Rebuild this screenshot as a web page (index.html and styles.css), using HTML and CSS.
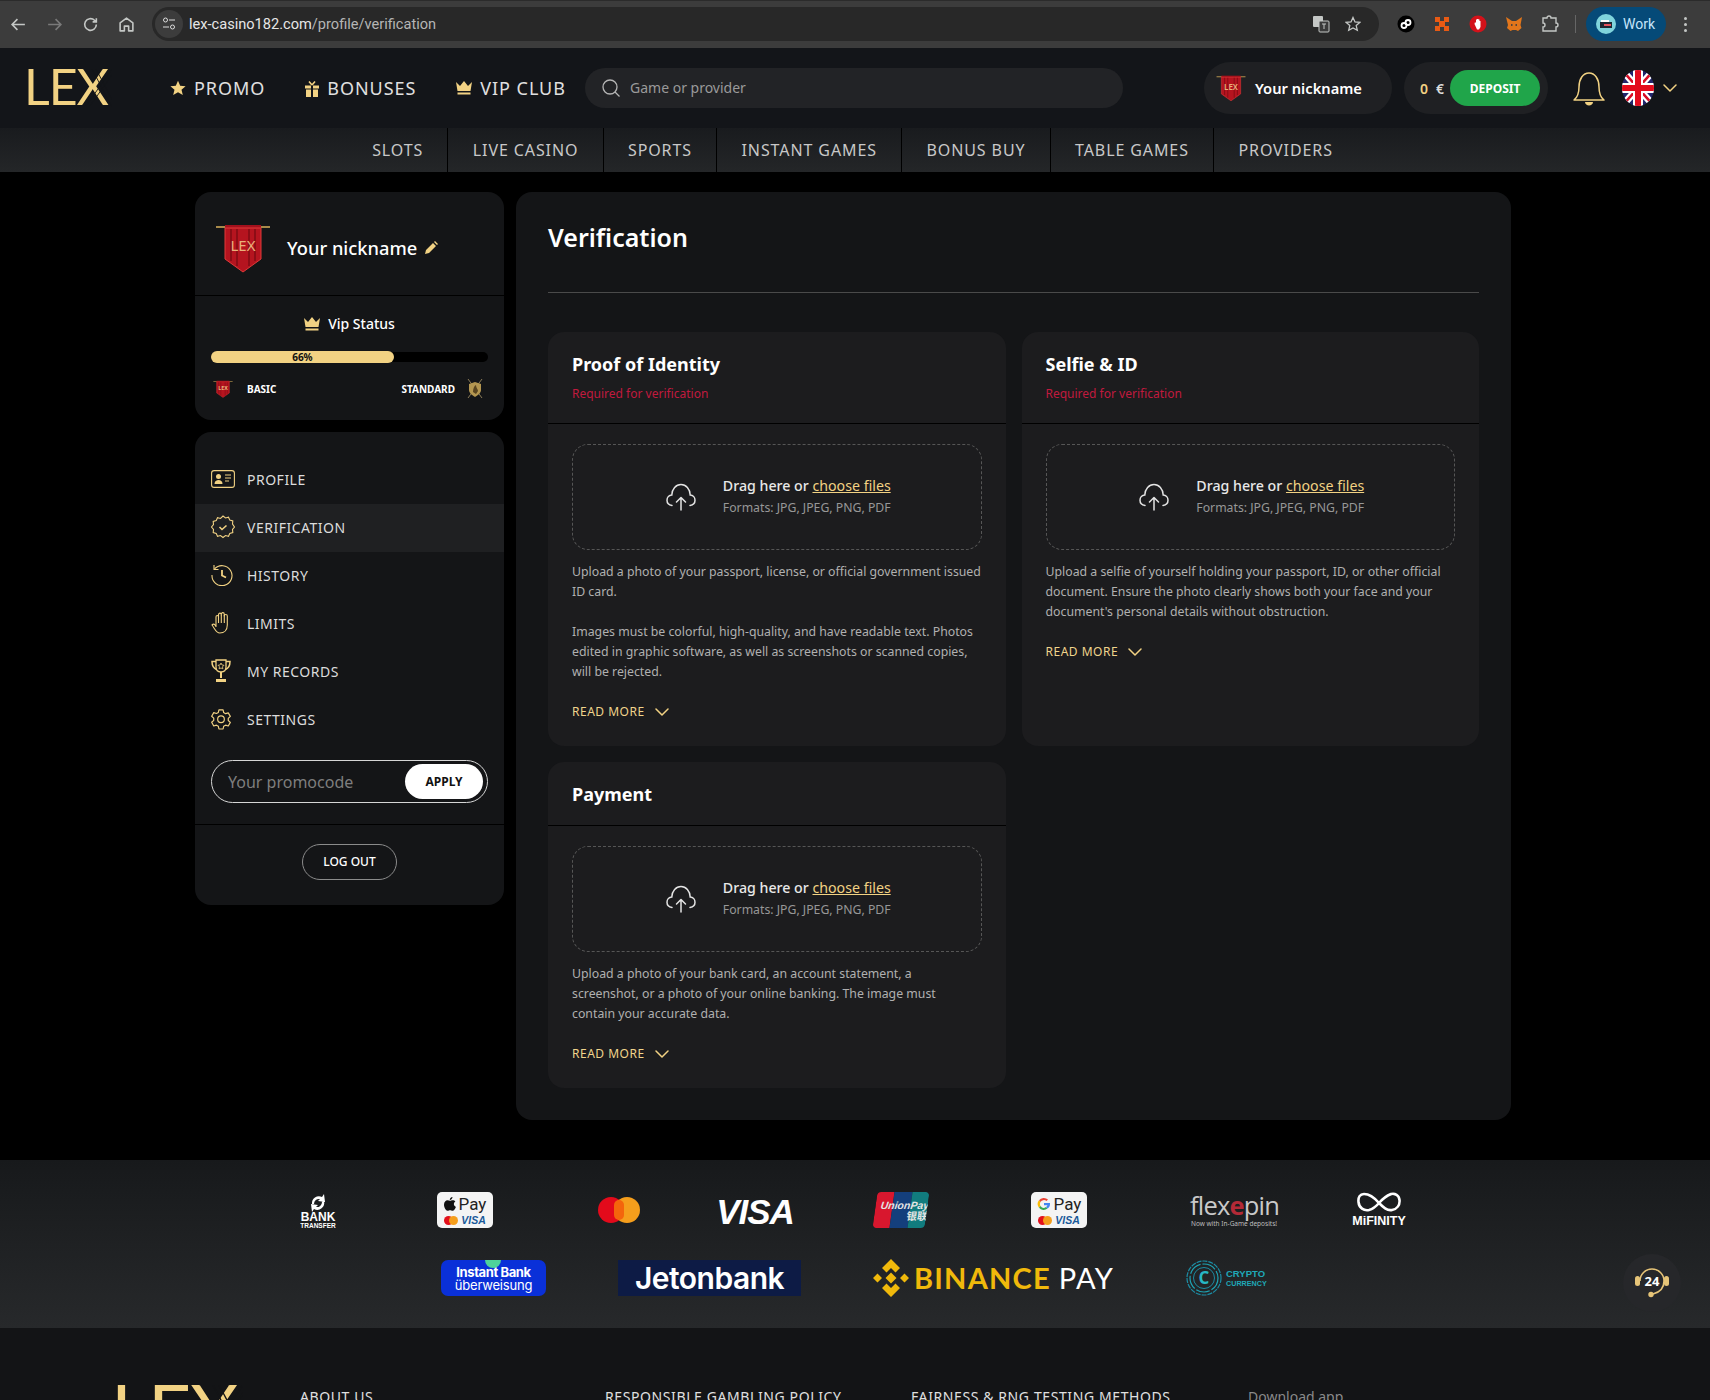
FILE: index.html
```html
<!DOCTYPE html>
<html lang="en">
<head>
    <meta charset="UTF-8">
    <title>Verification</title>
    <link rel="stylesheet" href="styles.css">
</head>
<body>
    <svg class="defs" width="0" height="0">
        <symbol id="banner" viewBox="0 0 56 50">
            <rect x="1" y="3" width="54" height="2" fill="#a88a4a"/>
            <path d="M10 2 H46 V6 H10Z" fill="#a3101c"/>
            <path d="M10 5 H46 V36 L28 49 L10 36Z" fill="#b5141f" stroke="#e03a3a" stroke-width="1"/>
            <path d="M16 6 V38 M22 6 V43 M34 6 V43 M40 6 V38" stroke="#8c0d16" stroke-width="2"/>
            <text x="28" y="28" class="banner-text" text-anchor="middle">LEX</text>
        </symbol>
        <symbol id="cloud" viewBox="0 0 30 28">
            <path d="M6 22.5C3 22 1 19.8 1 17.2 1 14.4 3.2 12.2 5.8 12 6 6 10 1.500 15 1.500S24 6 24.200 12C26.800 12.200 29 14.400 29 17.200 29 19.800 27 22 24 22.500" fill="none" stroke="#e4e4e4" stroke-width="1.500" stroke-linecap="round"/>
            <path d="M15 27V14.500M10.500 19 15 14.500 19.500 19" fill="none" stroke="#e4e4e4" stroke-width="1.500" stroke-linecap="round" stroke-linejoin="round"/>
        </symbol>
        <symbol id="chev" viewBox="0 0 14 8">
            <path d="M1 1 7 7 13 1" fill="none" stroke="#f2d283" stroke-width="1.500" stroke-linecap="round" stroke-linejoin="round"/>
        </symbol>
        <symbol id="crown" viewBox="0 0 16 14">
            <path d="M0 1 4 5 8 0 12 5 16 1 14.500 10H1.500Z" fill="#f2d283"/>
            <rect x="1.500" y="11.500" width="13" height="2" fill="#f2d283"/>
        </symbol>
    </svg>

    <div class="browser">
        <svg class="br-ic" viewBox="0 0 16 16"><path d="M14 8H2M7 3 2 8l5 5" fill="none" stroke="#c4c7c5" stroke-width="1.500"/></svg>
        <svg class="br-ic" viewBox="0 0 16 16"><path d="M2 8h12M9 3l5 5-5 5" fill="none" stroke="#7a7a7a" stroke-width="1.500"/></svg>
        <svg class="br-ic" viewBox="0 0 16 16"><path d="M13.500 8A5.500 5.500 0 1 1 11.800 4L13.500 5.500M13.500 2V5.500H10" fill="none" stroke="#c4c7c5" stroke-width="1.500"/></svg>
        <svg class="br-ic" viewBox="0 0 16 16"><path d="M2 14V6.500L8 2l6 4.500V14H10V9.500H6V14Z" fill="none" stroke="#c4c7c5" stroke-width="1.500" stroke-linejoin="round"/></svg>
        <div class="omni">
            <span class="omni-tune"><svg width="14" height="14" viewBox="0 0 14 14"><circle cx="3.500" cy="3" r="2" fill="none" stroke="#ddd"/><path d="M7 3h6M1 10h6" stroke="#ddd"/><circle cx="10.500" cy="10" r="2" fill="none" stroke="#ddd"/></svg></span>
            <span class="omni-url">lex-casino182.com<span class="omni-path">/profile/verification</span></span>
            <svg class="omni-tr" viewBox="0 0 18 18"><rect x="1" y="1" width="10" height="11" rx="1" fill="#c4c7c5"/><rect x="7" y="6" width="10" height="11" rx="1" fill="#3a3a3a" stroke="#c4c7c5"/><path d="M10 9h4M12 9v5" stroke="#c4c7c5"/></svg>
            <svg class="omni-star" viewBox="0 0 16 16"><path d="M8 1.500 10 6l4.800.4-3.600 3.200 1.100 4.700L8 11.900l-4.300 2.400 1.100-4.700L1.200 6.400 6 6Z" fill="none" stroke="#c4c7c5" stroke-width="1.300"/></svg>
        </div>
        <div class="ext-list">
            <svg class="ext" viewBox="0 0 18 18"><circle cx="9" cy="9" r="8.500" fill="#000"/><circle cx="7" cy="10.500" r="2.500" fill="none" stroke="#fff" stroke-width="1.800"/><circle cx="11" cy="7.500" r="2.500" fill="none" stroke="#fff" stroke-width="1.800"/></svg>
            <svg class="ext" viewBox="0 0 18 18"><path d="M2 2h5v5H2ZM11 2h5v5h-5ZM2 11h5v5H2ZM11 11h5v5h-5ZM6 6h6v6H6Z" fill="#e85a14"/></svg>
            <svg class="ext" viewBox="0 0 18 18"><circle cx="9" cy="9" r="8.500" fill="#d3121a"/><path d="M5.500 9 6 7l1 1V4.500h1V4h1.500v.5h1V6h1v6l-1.500 2.500H8Z" fill="#fff"/></svg>
            <svg class="ext" viewBox="0 0 18 18"><path d="M1 2 7 6h4l6-4-1.500 8 1 3-3.500 3-2-1H7.500l-2 1L2 13l1-3Z" fill="#e2761b"/><path d="M6 10h1.500M10.500 10H12" stroke="#233447" stroke-width="1.500"/></svg>
            <svg class="ext" viewBox="0 0 18 18"><path d="M2 3h4a2 2 0 0 1 4 0h5v5a2 2 0 0 1 0 4v4H2v-4a2 2 0 0 0 0-4Z" fill="none" stroke="#c4c7c5" stroke-width="1.400"/></svg>
        </div>
        <span class="br-sep"></span>
        <div class="work">
            <svg width="20" height="20" viewBox="0 0 20 20"><circle cx="10" cy="10" r="10" fill="#7fd4dc"/><path d="M4 8h12v6H4Z" fill="#1d2833"/><path d="M8 10h7v2H8Z" fill="#e2525c"/><path d="M5 6h8v2H5Z" fill="#fff"/></svg>
            <span>Work</span>
        </div>
        <span class="br-dots"><i></i><i></i><i></i></span>
    </div>

    <header class="top">
        <a class="logo">
            <svg width="88" height="38" viewBox="0 0 88 38">
                <text x="0" y="36" class="logo-text">LEX</text>
                <path d="M62 37 88 0M66 37 92 0M68 0 88 38M72 0 92 38" class="logo-cut"/>
            </svg>
        </a>
        <nav class="main-nav">
            <a class="main-link"><svg width="16" height="16" viewBox="0 0 16 16"><path d="M8 .8 10.200 5.800l5.400.5-4.100 3.500 1.300 5.300L8 12.300l-4.800 2.800 1.300-5.300L.4 6.300l5.400-.5Z" fill="#f2d283"/></svg>PROMO</a>
            <a class="main-link"><svg width="14" height="17" viewBox="0 0 14 17"><path d="M0 5.500h6v3H0ZM8 5.500h6v3H8ZM1 9.500h5V17H1ZM8 9.500h5V17H8Z" fill="#f2d283"/><path d="M7 5 4 1.500M7 5l3-3.500" stroke="#f2d283" stroke-width="1.600" fill="none"/></svg>BONUSES</a>
            <a class="main-link"><svg width="16" height="14"><use href="#crown"/></svg>VIP CLUB</a>
        </nav>
        <div class="search">
            <svg width="20" height="20" viewBox="0 0 20 20"><circle cx="9" cy="9" r="7" fill="none" stroke="#b5b5b5" stroke-width="1.300"/><path d="M14 14l4.500 4.500" stroke="#b5b5b5" stroke-width="1.300"/></svg>
            <span>Game or provider</span>
        </div>
        <div class="user-pill">
            <svg width="30" height="32"><use href="#banner"/></svg>
            <span>Your nickname</span>
        </div>
        <div class="balance">
            <span class="bal-num">0</span><span class="bal-cur">€</span>
            <a class="deposit">DEPOSIT</a>
        </div>
        <svg class="bell" width="32" height="35" viewBox="0 0 32 35">
            <path d="M1 29c4-3 5-7 5-13C6 8 10 2 16 2s10 6 10 14c0 6 1 10 5 13Z" fill="none" stroke="#f2d283" stroke-width="1.500" stroke-linejoin="round"/>
            <path d="M12 31h8c0 2-2 3.500-4 3.500S12 33 12 31Z" fill="#f2d283"/>
        </svg>
        <svg class="flag" width="32" height="36" viewBox="0 0 32 36">
            <clipPath id="flagc"><ellipse cx="16" cy="18" rx="16" ry="18"/></clipPath>
            <g clip-path="url(#flagc)">
                <rect width="32" height="36" fill="#22246b"/>
                <path d="M0 0 32 36M32 0 0 36" stroke="#fff" stroke-width="7"/>
                <path d="M0 0 32 36M32 0 0 36" stroke="#d80d25" stroke-width="2.500"/>
                <path d="M16 0V36M0 18H32" stroke="#fff" stroke-width="10"/>
                <path d="M16 0V36M0 18H32" stroke="#e30b1c" stroke-width="6"/>
            </g>
        </svg>
        <svg class="lang-chev" width="14" height="8"><use href="#chev"/></svg>
    </header>

    <nav class="sub-nav">
        <a class="sub-link">SLOTS</a>
        <a class="sub-link">LIVE CASINO</a>
        <a class="sub-link">SPORTS</a>
        <a class="sub-link">INSTANT GAMES</a>
        <a class="sub-link">BONUS BUY</a>
        <a class="sub-link">TABLE GAMES</a>
        <a class="sub-link">PROVIDERS</a>
    </nav>

    <div class="page">
        <aside class="side">
            <section class="side-card">
                <div class="side-user">
                    <svg width="56" height="50"><use href="#banner"/></svg>
                    <span class="side-name">Your nickname</span>
                    <svg width="13" height="13" viewBox="0 0 13 13"><path d="M0 13 1 9 8 2l3 3-7 7ZM9 1l1-1 3 3-1 1Z" fill="#f2d283"/></svg>
                </div>
                <div class="vip">
                    <div class="vip-title"><svg width="16" height="14"><use href="#crown"/></svg>Vip Status</div>
                    <div class="bar"><div class="bar-fill" style="width:66%">66%</div></div>
                    <div class="vip-levels">
                        <svg width="20" height="20"><use href="#banner"/></svg>
                        <span class="vip-basic">BASIC</span>
                        <span class="vip-std">STANDARD</span>
                        <svg width="16" height="21" viewBox="0 0 16 21">
                            <path d="M1 1 15 20M15 1 1 20" stroke="#8b7b58" stroke-width="1"/>
                            <path d="M2 6 8 4l6 2v6c0 3-3 5-6 7-3-2-6-4-6-7Z" fill="#b49650"/>
                            <path d="M6 14c0-3 1-6 3-7 0 3 2 4 2 6l-2 3Z" fill="#5a4520"/>
                        </svg>
                    </div>
                </div>
            </section>
            <section class="side-card">
                <ul class="menu">
                    <li class="menu-item">
                        <svg width="24" height="18" viewBox="0 0 24 18"><rect x=".6" y=".6" width="22.800" height="16.800" rx="2.500" fill="none" stroke="#f2d283" stroke-width="1.100"/><circle cx="7.500" cy="6.500" r="2.500" fill="#f2d283"/><path d="M3.500 14c0-3 2-4 4-4s4 1 4 4Z" fill="#f2d283"/><path d="M14 5h6M14 8h6M14 11h4" stroke="#f2d283"/></svg>
                        PROFILE
                    </li>
                    <li class="menu-item is-active">
                        <svg width="24" height="24" viewBox="0 0 24 24"><path d="M12 1l2.500 2 3-.8 1.300 2.900 3 .8-.3 3.100L23.500 12l-2 2.500.3 3-3 .9-1.300 2.900-3-.8-2.500 2-2.500-2-3 .8-1.300-2.900-3-.9.3-3L.500 12l2-2.500-.3-3 3-.9 1.300-2.900 3 .8Z" fill="none" stroke="#f2d283" stroke-width="1.100"/><path d="M8.500 12l2.500 2.500 4.500-4" fill="none" stroke="#f2d283" stroke-width="1.600"/></svg>
                        VERIFICATION
                    </li>
                    <li class="menu-item">
                        <svg width="22" height="22" viewBox="0 0 22 22"><path d="M3.500 5A10 10 0 1 1 1 11" fill="none" stroke="#f2d283" stroke-width="1.100"/><path d="M3 1v4.500h4.500" fill="none" stroke="#f2d283" stroke-width="1.100"/><path d="M11 6v5.500l4 2" fill="none" stroke="#f2d283" stroke-width="1.800"/></svg>
                        HISTORY
                    </li>
                    <li class="menu-item">
                        <svg width="22" height="22" viewBox="0 0 22 22"><path d="M1 13c2-2 3 0 4 1.500V5c0-2 2.500-2 2.500 0V3c0-2.500 2.800-2.500 2.800 0v-.5c0-2.500 3-2.500 3 0V4c0-2 3-2 3 0v9c0 5-3 8-7.500 8C5 21 4 17 1 13Z" fill="none" stroke="#f2d283" stroke-width="1.100" stroke-linejoin="round"/><path d="M7.500 5v6M10.300 3v8M13.300 3v8" stroke="#f2d283" stroke-width="1.100"/></svg>
                        LIMITS
                    </li>
                    <li class="menu-item">
                        <svg width="20" height="24" viewBox="0 0 20 24"><path d="M5 1h10v7c0 3-2 5-5 5s-5-2-5-5Z" fill="none" stroke="#f2d283" stroke-width="1.300"/><path d="M5 2.500H1c0 4 1 6.500 4.500 8M15 2.500h4c0 4-1 6.500-4.500 8" fill="none" stroke="#f2d283" stroke-width="1.500"/><path d="M10 4l1 2 2 .3-1.500 1.500.4 2L10 9l-1.900.8.400-2L7 6.300 9 6Z" fill="none" stroke="#f2d283" stroke-width=".8"/><path d="M9 13h2v6H9Z" fill="#f2d283"/><path d="M5 20h10v3H5Z" fill="#f2d283"/></svg>
                        MY RECORDS
                    </li>
                    <li class="menu-item">
                        <svg width="20" height="22" viewBox="0 0 24 24"><path d="M9.500 1h5l.7 3.300 2.300 1.300 3.200-1 2.500 4.300-2.500 2.300v2.600l2.500 2.300-2.500 4.300-3.200-1-2.300 1.300-.7 3.300h-5l-.7-3.300-2.300-1.300-3.200 1L.800 15.900l2.500-2.300V11L.800 8.700l2.500-4.300 3.200 1 2.300-1.300Z" fill="none" stroke="#f2d283" stroke-width="1.400" stroke-linejoin="round"/><circle cx="12" cy="12.300" r="4" fill="none" stroke="#f2d283" stroke-width="1.400"/></svg>
                        SETTINGS
                    </li>
                </ul>
                <div class="promo">
                    <span class="promo-ph">Your promocode</span>
                    <a class="promo-btn">APPLY</a>
                </div>
                <div class="logout-row"><a class="logout">LOG OUT</a></div>
            </section>
        </aside>

        <main class="main">
            <h1 class="main-title">Verification</h1>
            <div class="doc-grid">
                <section class="doc">
                    <div class="doc-head">
                        <h2 class="doc-title">Proof of Identity</h2>
                        <div class="doc-req">Required for verification</div>
                    </div>
                    <div class="doc-body">
                        <div class="drop">
                            <svg width="30" height="28"><use href="#cloud"/></svg>
                            <div>
                                <div class="drop-main">Drag here or <a class="drop-link">choose files</a></div>
                                <div class="drop-sub">Formats: JPG, JPEG, PNG, PDF</div>
                            </div>
                        </div>
                        <p class="doc-text">Upload a photo of your passport, license, or official government issued ID card.</p>
                        <p class="doc-text">Images must be colorful, high-quality, and have readable text. Photos edited in graphic software, as well as screenshots or scanned copies, will be rejected.</p>
                        <a class="more">READ MORE <svg width="14" height="8"><use href="#chev"/></svg></a>
                    </div>
                </section>
                <section class="doc">
                    <div class="doc-head">
                        <h2 class="doc-title">Selfie &amp; ID</h2>
                        <div class="doc-req">Required for verification</div>
                    </div>
                    <div class="doc-body">
                        <div class="drop">
                            <svg width="30" height="28"><use href="#cloud"/></svg>
                            <div>
                                <div class="drop-main">Drag here or <a class="drop-link">choose files</a></div>
                                <div class="drop-sub">Formats: JPG, JPEG, PNG, PDF</div>
                            </div>
                        </div>
                        <p class="doc-text">Upload a selfie of yourself holding your passport, ID, or other official document. Ensure the photo clearly shows both your face and your document's personal details without obstruction.</p>
                        <a class="more">READ MORE <svg width="14" height="8"><use href="#chev"/></svg></a>
                    </div>
                </section>
                <section class="doc">
                    <div class="doc-head doc-head-short">
                        <h2 class="doc-title">Payment</h2>
                    </div>
                    <div class="doc-body">
                        <div class="drop">
                            <svg width="30" height="28"><use href="#cloud"/></svg>
                            <div>
                                <div class="drop-main">Drag here or <a class="drop-link">choose files</a></div>
                                <div class="drop-sub">Formats: JPG, JPEG, PNG, PDF</div>
                            </div>
                        </div>
                        <p class="doc-text">Upload a photo of your bank card, an account statement, a<br>screenshot, or a photo of your online banking. The image must contain your accurate data.</p>
                        <a class="more">READ MORE <svg width="14" height="8"><use href="#chev"/></svg></a>
                    </div>
                </section>
            </div>
        </main>
    </div>

    <section class="pay">
        <div class="pay-row pay-row-top">
            <svg class="p-bank" width="36" height="36" viewBox="0 0 36 36">
                <path d="M12 12a7 7 0 0 1 10-7l2-3 1 8-7-1 2-2a5 5 0 0 0-6 5ZM24 9a7 7 0 0 1-10 8l-2 3-1-8 7 1-2 2a5 5 0 0 0 6-5Z" fill="#fff"/>
                <text x="18" y="29" class="t-bank" text-anchor="middle">BANK</text>
                <text x="18" y="35.500" class="t-bank2" text-anchor="middle">TRANSFER</text>
            </svg>
            <div class="p-wallet p-apple">
                <div class="wallet-top"><svg width="12" height="14" viewBox="0 0 12 14"><path d="M8.500 0c.1 1.500-1.200 3-2.700 3C5.600 1.500 7 .1 8.500 0ZM6 3.800c.8 0 1.500-.6 2.800-.6 1 0 2 .5 2.600 1.400-2.200 1.300-1.900 4.400.5 5.300-.6 1.600-1.900 3.900-3.300 3.900-1 0-1.400-.6-2.500-.6s-1.500.6-2.500.6C1.800 13.800 0 10.500 0 7.800c0-2.800 1.800-4.500 3.500-4.500 1 0 1.900.5 2.500.5Z" fill="#111"/></svg><span>Pay</span></div>
                <div class="wallet-bot"><i class="mc-a"></i><i class="mc-b"></i><b>VISA</b></div>
            </div>
            <div class="p-mc"><i class="mc-l"></i><i class="mc-m"></i><i class="mc-r"></i></div>
            <span class="p-visa">VISA</span>
            <div class="p-union">
                <i class="un-r"></i><i class="un-b"></i><i class="un-g"></i>
                <span class="un-text">UnionPay<br><em>银联</em></span>
            </div>
            <div class="p-wallet p-google">
                <div class="wallet-top"><svg width="14" height="14" viewBox="0 0 14 14"><path d="M2 3.300A6 6 0 0 1 11 2.600L9.500 4.100A4 4 0 0 0 3.500 5Z" fill="#ea4335"/><path d="M3.500 9 2 10.700A6 6 0 0 1 2 3.300L3.500 5a4 4 0 0 0 0 4Z" fill="#fbbc05"/><path d="M10.500 11.500A6 6 0 0 1 2 10.700L3.500 9a4 4 0 0 0 5.500 1Z" fill="#34a853"/><path d="M13 7c0 2-.9 3.500-2.500 4.500L9 10a2.500 2.500 0 0 0 1.400-1.800H7V6h6Z" fill="#4285f4"/></svg><span>Pay</span></div>
                <div class="wallet-bot"><i class="mc-a"></i><i class="mc-b"></i><b>VISA</b></div>
            </div>
            <div class="p-flex">
                <div class="flex-name">flex<span>e</span>pin</div>
                <div class="flex-sub">Now with In-Game deposits!</div>
            </div>
            <div class="p-mif">
                <svg width="46" height="22" viewBox="0 0 46 22"><path d="M23 11C17 4 12 2 8 2 4 2 2 5 2.500 10 3 16 8 19 13 18 17 17 20 14.500 23 11 26 7.500 30 4 35 2 39 1 43 3 43.500 8 44 13 41 17 36 18 31 19 27 15 23 11Z" fill="none" stroke="#fff" stroke-width="2.600"/><path d="M2.500 10C3 16 8 19 13 18M29 5C33 2 40 1 43 6" fill="none" stroke="#fff" stroke-width="1.200"/></svg>
                <span>MiFINITY</span>
            </div>
        </div>
        <div class="pay-row">
            <div class="p-instant">
                <i class="inst-dot"></i>
                <span class="inst-a">Instant Bank</span>
                <span class="inst-b">überweisung</span>
            </div>
            <div class="p-jeton">Jetonbank</div>
            <div class="p-binance">
                <svg width="36" height="38" viewBox="0 0 36 38"><path d="M18 0 27 9 22.500 13.500 18 9 13.500 13.500 9 9ZM18 38 27 29 22.500 24.500 18 29 13.500 24.500 9 29ZM0 19 4.500 14.500 9 19 4.500 23.500ZM27 19 31.500 14.500 36 19 31.500 23.500ZM18 13.500 23.500 19 18 24.500 12.500 19Z" fill="#f0b90b"/></svg>
                <span class="bn-a">BINANCE</span><span class="bn-b">PAY</span>
            </div>
            <div class="p-crypto">
                <svg width="36" height="36" viewBox="0 0 36 36">
                    <circle cx="18" cy="18" r="17" fill="none" stroke="#1c8ba3" stroke-width="1.200" stroke-dasharray="5 1"/>
                    <circle cx="18" cy="18" r="14" fill="none" stroke="#1ea4b5" stroke-width="1.200" stroke-dasharray="14 2"/>
                    <circle cx="18" cy="18" r="10.500" fill="none" stroke="#1c8ba3" stroke-width="1"/>
                    <text x="18" y="24" class="t-crypto" text-anchor="middle">C</text>
                </svg>
                <div class="crypto-text"><div>CRYPTO</div><div>CURRENCY</div></div>
            </div>
        </div>
        <div class="support">
            <svg width="36" height="34" viewBox="0 0 36 34">
                <path d="M6 15a12 12 0 0 1 24 0c0 7-3 11-11 13" fill="none" stroke="#e6c478" stroke-width="1.600"/>
                <rect x="1" y="10" width="5" height="10" rx="2.500" fill="#e6c478"/>
                <rect x="30" y="10" width="5" height="10" rx="2.500" fill="#e6c478"/>
                <circle cx="17" cy="28.500" r="2.700" fill="#e6c478"/>
                <text x="18" y="20" class="t-24" text-anchor="middle">24</text>
            </svg>
        </div>
    </section>

    <footer class="foot">
        <svg class="foot-logo" width="132" height="57" viewBox="0 0 88 38"><text x="0" y="36" class="logo-text">LEX</text><path d="M62 37 88 0M66 37 92 0M68 0 88 38M72 0 92 38" class="logo-cut foot-cut"/></svg>
        <a class="foot-link foot-about">ABOUT US</a>
        <a class="foot-link foot-resp">RESPONSIBLE GAMBLING POLICY</a>
        <a class="foot-link foot-fair">FAIRNESS &amp; RNG TESTING METHODS</a>
        <a class="foot-down">Download app</a>
    </footer>
</body>
</html>
```

FILE: styles.css
```css
* {
    box-sizing: border-box;
}
html, body {
    height: 1400px;
    overflow: hidden;
}
body {
    margin: 0;
    background-color: #000;
    color: #fff;
    font-family: "Noto Sans", "Open Sans", sans-serif;
    display: flex;
    flex-direction: column;
}
.defs {
    position: absolute;
}
a {
    color: inherit;
}
h1, h2, p, ul {
    margin: 0;
    padding: 0;
}
.banner-text {
    font-family: "Noto Sans", sans-serif;
    font-size: 15px;
    fill: #e9b07a;
}

/* browser bar */
.browser {
    height: 48px;
    flex: none;
    background-color: #3c3c3c;
    box-shadow: inset 0 1px 0 #2b2b2b;
    display: flex;
    align-items: center;
    padding-left: 10px;
}
.br-ic {
    width: 17px;
    height: 17px;
    margin-right: 19px;
}
.omni {
    width: 1227px;
    height: 34px;
    margin-left: -2px;
    border-radius: 17px;
    background-color: #282828;
    display: flex;
    align-items: center;
    padding: 0 3px;
}
.omni-tune {
    width: 28px;
    height: 28px;
    border-radius: 14px;
    background-color: #3c3c3c;
    display: flex;
    align-items: center;
    justify-content: center;
}
.omni-url {
    margin-left: 6px;
    flex: 1;
    font-family: Roboto, sans-serif;
    font-size: 14.600px;
    color: #e6e6e6;
}
.omni-path {
    color: #b5b5b5;
}
.omni-tr {
    width: 18px;
    height: 18px;
    margin-right: 15px;
}
.omni-star {
    width: 16px;
    height: 16px;
    margin-right: 15px;
}
.ext-list {
    display: flex;
    gap: 18px;
    margin-left: 18px;
}
.ext {
    width: 18px;
    height: 18px;
}
.br-sep {
    width: 1px;
    height: 18px;
    margin-left: 16px;
    background-color: #666;
}
.work {
    margin-left: 10px;
    width: 80px;
    height: 34px;
    border-radius: 17px;
    background-color: #054a78;
    color: #c5e5fb;
    font-family: Roboto, sans-serif;
    font-size: 14px;
    display: flex;
    align-items: center;
    gap: 7px;
    padding-left: 10px;
}
.br-dots {
    margin-left: 18px;
    display: flex;
    flex-direction: column;
    gap: 3px;
}
.br-dots i {
    width: 3px;
    height: 3px;
    border-radius: 2px;
    background-color: #c4c7c5;
}

/* header */
.top {
    height: 80px;
    flex: none;
    background-color: #131519;
    display: flex;
    align-items: center;
    padding-left: 24px;
}
.logo {
    width: 88px;
    height: 38px;
}
.logo-text {
    font-family: "Lato", sans-serif;
    font-size: 50px;
    font-weight: 400;
    letter-spacing: -1px;
    fill: #f2d283;
}
.logo-cut {
    fill: none;
    stroke: #131519;
    stroke-width: .9;
}
.foot-cut {
    stroke: #131416;
}
.main-nav {
    display: flex;
    width: 415px;
    margin-left: 58px;
    gap: 40px;
}
.main-link {
    display: flex;
    align-items: center;
    gap: 8px;
    font-size: 18px;
    letter-spacing: .95px;
    color: #e0e0e0;
}
.search {
    width: 538px;
    height: 40px;
    flex: none;
    border-radius: 20px;
    background-color: #222326;
    display: flex;
    align-items: center;
    gap: 9px;
    padding: 0 0 1px 16px;
    font-size: 14px;
    color: #9a9a9a;
}
.user-pill {
    width: 188px;
    height: 52px;
    margin-left: 81px;
    border-radius: 26px;
    background-color: #1f2023;
    display: flex;
    align-items: center;
    gap: 9px;
    padding-left: 12px;
    font-size: 14.700px;
    font-weight: 600;
}
.balance {
    width: 144px;
    height: 52px;
    margin-left: 12px;
    border-radius: 26px;
    background-color: #1f2023;
    display: flex;
    align-items: center;
    padding-left: 16px;
    font-size: 14px;
    font-weight: 600;
}
.bal-num {
    color: #f2d283;
}
.bal-cur {
    margin-left: 8px;
    color: #ddd;
}
.deposit {
    margin-left: 6px;
    width: 90px;
    height: 36px;
    border-radius: 18px;
    background-color: #20a54a;
    font-size: 12px;
    font-weight: 700;
    display: flex;
    align-items: center;
    justify-content: center;
}
.bell {
    margin-left: 25px;
}
.flag {
    margin-left: 17px;
}
.lang-chev {
    margin-left: 9px;
}

/* categories */
.sub-nav {
    height: 44px;
    flex: none;
    background: linear-gradient(#191b1e, #242628);
    display: flex;
    justify-content: center;
    padding-right: 5px;
}
.sub-link {
    display: flex;
    align-items: center;
    padding: 0 24.300px;
    border-left: 1px solid #000;
    font-size: 16px;
    letter-spacing: .9px;
    color: #c8c8c8;
}
.sub-link:first-child {
    border-left: none;
}

/* page */
.page {
    height: 988px;
    flex: none;
    display: flex;
    align-items: flex-start;
    gap: 12px;
    padding: 20px 199px 0 195px;
}
.side {
    width: 309px;
    flex: none;
    display: flex;
    flex-direction: column;
    gap: 12px;
}
.side-card {
    background-color: #141517;
    border-radius: 16px;
    overflow: hidden;
}
.side-user {
    height: 104px;
    border-bottom: 1px solid #000;
    display: flex;
    align-items: center;
    padding: 8px 0 0 20px;
}
.side-name {
    margin-left: 16px;
    margin-right: 8px;
    font-size: 18.300px;
    font-weight: 500;
}
.vip {
    padding: 18px 16px 0;
    height: 124px;
}
.vip-title {
    display: flex;
    align-items: center;
    justify-content: center;
    gap: 8px;
    font-size: 14px;
    font-weight: 500;
}
.bar {
    height: 10px;
    margin-top: 19px;
    background-color: #000;
    border-radius: 5px;
    display: flex;
    align-items: center;
}
.bar-fill {
    height: 12px;
    background-color: #f2d283;
    border-radius: 6px;
    color: #111;
    font-size: 10px;
    font-weight: 700;
    line-height: 12px;
    text-align: center;
}
.vip-levels {
    display: flex;
    align-items: center;
    margin-top: 16px;
    padding: 0 5px 0 2px;
    font-size: 10px;
    font-weight: 700;
}
.vip-basic {
    margin-left: 14px;
    flex: 1;
}
.vip-std {
    margin-right: 12px;
}
.menu {
    list-style: none;
    padding-top: 24px;
}
.menu-item {
    height: 48px;
    display: flex;
    align-items: center;
    position: relative;
    padding: 0 0 2px 52px;
    font-size: 14px;
    letter-spacing: .5px;
    color: #dcdcdc;
}
.menu-item svg {
    position: absolute;
    left: 16px;
}
.is-active {
    background-color: #1f2022;
}
.promo {
    height: 43px;
    margin: 16px 16px 0;
    padding: 0 4px 0 16px;
    border: 1px solid #d6d6d6;
    border-radius: 22px;
    display: flex;
    align-items: center;
    justify-content: space-between;
}
.promo-ph {
    font-size: 16px;
    color: #7e7e7e;
}
.promo-btn {
    width: 78px;
    height: 35px;
    border-radius: 18px;
    background-color: #fff;
    color: #111;
    font-size: 12px;
    font-weight: 700;
    display: flex;
    align-items: center;
    justify-content: center;
}
.logout-row {
    height: 81px;
    margin-top: 21px;
    border-top: 1px solid #000;
    display: flex;
    justify-content: center;
    padding-top: 19px;
}
.logout {
    width: 95px;
    height: 36px;
    border: 1px solid #8b8b8b;
    border-radius: 18px;
    padding-bottom: 2px;
    font-size: 12px;
    font-weight: 500;
    display: flex;
    align-items: center;
    justify-content: center;
}

.main {
    width: 995px;
    flex: none;
    height: 928px;
    background-color: #141517;
    border-radius: 16px;
    padding: 0 32px;
}
.main-title {
    height: 101px;
    padding-top: 28px;
    border-bottom: 1px solid #4a4a4a;
    font-size: 25px;
    font-weight: 600;
    line-height: 34px;
}
.doc-grid {
    display: grid;
    grid-template-columns: 1fr 1fr;
    gap: 16px;
    margin-top: 39px;
}
.doc {
    background-color: #1c1c1e;
    border-radius: 16px;
    overflow: hidden;
    padding-bottom: 24px;
}
.doc-head {
    height: 92px;
    padding: 20px 24px 0;
    border-bottom: 1px solid #000;
}
.doc-head-short {
    height: 64px;
}
.doc-title {
    font-size: 18px;
    font-weight: 700;
    line-height: 24px;
}
.doc-req {
    margin-top: 10px;
    font-size: 12px;
    line-height: 16px;
    color: #c01a3e;
}
.doc-body {
    padding: 20px 24px 0;
}
.drop {
    height: 106px;
    border: 1px dashed #565656;
    border-radius: 16px;
    padding-left: 3px;
    display: flex;
    align-items: center;
    justify-content: center;
    gap: 27px;
}
.drop-main {
    margin-top: -1px;
    font-size: 14.200px;
    line-height: 20px;
    font-weight: 500;
    color: #e8e8e8;
}
.drop-link {
    color: #f2d283;
    font-weight: 400;
    text-decoration: underline;
}
.drop-sub {
    margin-top: 3px;
    font-size: 12.250px;
    line-height: 18px;
    color: #979797;
}
.doc-text {
    margin-top: 12px;
    font-size: 12.300px;
    line-height: 20px;
    color: #b0b0b0;
}
.doc-text + .doc-text {
    margin-top: 20px;
}
.more {
    display: flex;
    align-items: center;
    gap: 10px;
    margin-top: 20px;
    font-size: 12px;
    line-height: 20px;
    letter-spacing: .5px;
    color: #f0d48c;
}

/* payment logos */
.pay {
    height: 168px;
    flex: none;
    background: linear-gradient(#17191b, #27292b);
    padding: 32px 3px 0 0;
    position: relative;
}
.pay-row {
    display: flex;
    justify-content: center;
    align-items: center;
    gap: 72px;
    height: 36px;
}
.pay-row + .pay-row {
    margin-top: 32px;
}
.pay-row-top {
    gap: 0;
    padding-right: 1px;
}
.t-bank {
    font-family: "Liberation Sans", sans-serif;
    font-size: 12px;
    font-weight: 700;
    fill: #fff;
}
.t-bank2 {
    font-family: "Liberation Sans", sans-serif;
    font-size: 6.500px;
    font-weight: 700;
    fill: #fff;
}
.p-wallet {
    width: 56px;
    height: 36px;
    border-radius: 5px;
    background-color: #f4f4f4;
    display: flex;
    flex-direction: column;
    align-items: center;
    padding-top: 3px;
}
.p-apple {
    margin-left: 101px;
}
.p-google {
    margin-left: 102px;
}
.wallet-top {
    display: flex;
    align-items: center;
    gap: 3px;
    height: 17px;
    color: #222;
    font-family: Roboto, sans-serif;
    font-size: 17px;
}
.wallet-bot {
    display: flex;
    align-items: center;
    margin-top: 3px;
    height: 10px;
    color: #1a5a9a;
    font-family: "Liberation Sans", sans-serif;
    font-size: 10.500px;
    font-style: italic;
}
.wallet-bot b {
    margin-left: 3px;
}
.mc-a, .mc-b {
    width: 9px;
    height: 9px;
    border-radius: 5px;
    background-color: #e2101c;
}
.mc-b {
    margin-left: -4px;
    background-color: #f59e1c;
}
.p-mc {
    display: flex;
    margin-left: 105px;
    width: 42px;
    position: relative;
}
.mc-l, .mc-r {
    width: 26px;
    height: 26px;
    border-radius: 13px;
    background-color: #e30a1b;
}
.mc-r {
    margin-left: -10px;
    background-color: #f59e1c;
}
.mc-m {
    position: absolute;
    left: 16px;
    top: 3px;
    width: 10px;
    height: 20px;
    border-radius: 5px;
    background-color: #f4650c;
    z-index: 1;
}
.p-visa {
    width: 78px;
    margin-left: 76px;
    padding-top: 4px;
    font-family: "Liberation Sans", sans-serif;
    font-size: 35px;
    font-weight: 700;
    font-style: italic;
    letter-spacing: -1px;
    line-height: 36px;
    text-align: center;
}
.p-union {
    width: 52px;
    height: 36px;
    margin-left: 81px;
    margin-right: 2px;
    position: relative;
    display: flex;
    transform: skewX(-8deg);
    border-radius: 4px;
    overflow: hidden;
}
.un-r, .un-b, .un-g {
    flex: 1;
    background-color: #d8172e;
}
.un-b {
    background-color: #143f7c;
}
.un-g {
    background-color: #117c7e;
}
.un-text {
    position: absolute;
    top: 8px;
    left: 5px;
    font-family: "Liberation Sans", "Noto Sans CJK SC", sans-serif;
    font-size: 10.500px;
    font-weight: 700;
    font-style: italic;
    line-height: 11px;
    color: #e4e4e4;
    text-align: right;
}
.un-text em {
    font-style: normal;
}
.p-flex {
    width: 88px;
    margin-left: 103px;
    text-align: center;
}
.flex-name {
    font-family: "Open Sans", sans-serif;
    font-size: 25.500px;
    letter-spacing: -.8px;
    line-height: 27px;
    color: #c9c9c9;
}
.flex-name span {
    color: #b32a37;
    font-weight: 700;
}
.flex-sub {
    font-size: 6.500px;
    line-height: 9px;
    color: #bdbdbd;
}
.p-mif {
    margin-left: 74px;
    width: 54px;
    display: flex;
    flex-direction: column;
    align-items: center;
    font-family: "Liberation Sans", sans-serif;
    font-size: 12.500px;
    font-weight: 700;
    line-height: 14px;
}
.p-instant {
    width: 105px;
    height: 36px;
    border-radius: 7px;
    background-color: #0a30d8;
    position: relative;
    overflow: hidden;
    display: flex;
    flex-direction: column;
    align-items: center;
    padding-top: 6px;
    font-family: Inter, sans-serif;
    font-size: 13px;
    line-height: 13px;
}
.inst-dot {
    position: absolute;
    top: -8px;
    left: 44px;
    width: 16px;
    height: 16px;
    border-radius: 8px;
    background-color: #4ed39a;
}
.inst-a {
    font-weight: 700;
    letter-spacing: -.4px;
}
.inst-b {
    letter-spacing: -.2px;
}
.p-jeton {
    width: 183px;
    height: 36px;
    background-color: #0d1b45;
    font-family: Inter, sans-serif;
    font-size: 30px;
    font-weight: 600;
    letter-spacing: -.5px;
    line-height: 36px;
    text-align: center;
}
.p-binance {
    width: 241px;
    display: flex;
    align-items: center;
    font-family: Lato, sans-serif;
    font-size: 29px;
    font-weight: 700;
    letter-spacing: 1.200px;
    line-height: 36px;
    padding-bottom: 1px;
}
.p-binance svg {
    flex: none;
}
.bn-a {
    margin-left: 5px;
    color: #f0b90b;
}
.bn-b {
    margin-left: 8px;
    font-weight: 400;
}
.p-crypto {
    width: 80px;
    display: flex;
    align-items: center;
    gap: 4px;
    font-family: "Liberation Sans", sans-serif;
    font-size: 7.200px;
    font-weight: 700;
    line-height: 9px;
    color: #1fa8b8;
}
.p-crypto svg {
    flex: none;
}
.t-crypto {
    font-family: "Open Sans", sans-serif;
    font-size: 17px;
    font-weight: 700;
    fill: #27b7c4;
}
.crypto-text div:first-child {
    font-size: 9.500px;
    line-height: 11px;
}
.support {
    position: absolute;
    left: 1623px;
    top: 94px;
    width: 58px;
    height: 58px;
    border-radius: 29px;
    background-color: #26272a;
    display: flex;
    align-items: center;
    justify-content: center;
}
.t-24 {
    font-family: "Open Sans", sans-serif;
    font-size: 13px;
    font-weight: 700;
    fill: #fff;
}

/* footer, cut by the window */
.foot {
    height: 72px;
    flex: none;
    background-color: #131416;
    position: relative;
    overflow: hidden;
    font-size: 14px;
    letter-spacing: .6px;
    color: #e0e0e0;
}
.foot-logo {
    position: absolute;
    left: 111px;
    top: 57px;
}
.foot-link, .foot-down {
    position: absolute;
    top: 59px;
}
.foot-about {
    left: 300px;
}
.foot-resp {
    left: 605px;
}
.foot-fair {
    left: 911px;
}
.foot-down {
    left: 1248px;
    letter-spacing: 0;
    color: #8a8a8a;
}
```
